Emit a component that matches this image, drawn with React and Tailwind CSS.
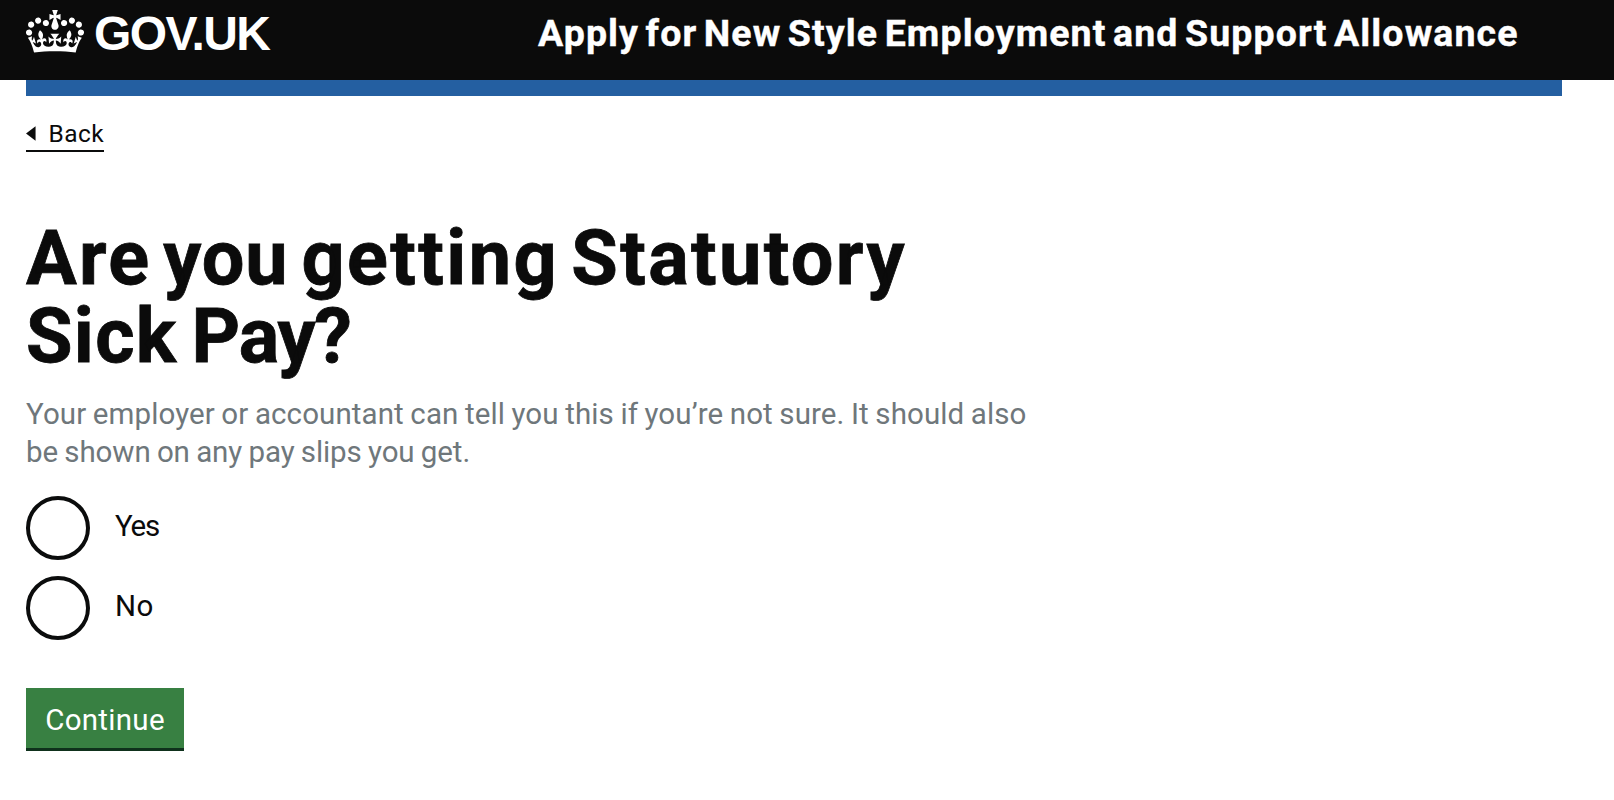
import React from "react";

function Crown() {
  return (
    <svg className="block h-[43px] w-[58px] shrink-0" viewBox="0 0 132 97" preserveAspectRatio="none" fill="#fff" aria-hidden="true">
      <path
        fillRule="evenodd"
        d="M25 30.2c3.5 1.5 7.7-.2 9.1-3.7 1.5-3.6-.2-7.8-3.9-9.2-3.6-1.4-7.6.3-9.1 3.9-1.4 3.5.3 7.5 3.9 9zM9 39.5c3.6 1.5 7.8-.2 9.2-3.7 1.5-3.6-.2-7.8-3.9-9.1-3.6-1.5-7.6.2-9.1 3.8-1.4 3.5.3 7.5 3.8 9zM4.4 57.2c3.5 1.5 7.7-.2 9.1-3.8 1.5-3.6-.2-7.7-3.9-9.1-3.5-1.5-7.6.3-9.1 3.8-1.4 3.5.3 7.6 3.9 9.1zm38.3-21.4c3.5 1.5 7.7-.2 9.1-3.8 1.5-3.6-.2-7.7-3.9-9.1-3.6-1.5-7.6.3-9.1 3.8-1.3 3.6.4 7.7 3.9 9.1zm64.4-5.6c-3.6 1.5-7.8-.2-9.1-3.7-1.5-3.6.2-7.8 3.8-9.2 3.6-1.4 7.7.3 9.2 3.9 1.3 3.5-.4 7.5-3.9 9zm15.9 9.3c-3.6 1.5-7.7-.2-9.1-3.7-1.5-3.6.2-7.8 3.7-9.1 3.6-1.5 7.7.2 9.2 3.8 1.5 3.5-.3 7.5-3.8 9zm4.7 17.7c-3.6 1.5-7.8-.2-9.2-3.8-1.5-3.6.2-7.7 3.9-9.1 3.6-1.5 7.7.3 9.2 3.8 1.3 3.5-.4 7.6-3.9 9.1zM89.3 35.8c-3.6 1.5-7.8-.2-9.2-3.8-1.4-3.6.2-7.7 3.9-9.1 3.6-1.5 7.7.3 9.2 3.8 1.4 3.6-.3 7.7-3.9 9.1zM69.7 17.7l8.9 4.7V9.3l-8.9 2.8c-.2-.3-.5-.6-.9-.9L72.4 0H59.6l3.5 11.2c-.3.3-.6.5-.9.9l-8.8-2.8v13.1l8.8-4.7c.3.3.6.7.9.9l-5 15.4v.1c-.2.8-.4 1.6-.4 2.4 0 4.1 3.1 7.5 7 8.1h.2c.3 0 .7.1 1 .1.4 0 .7 0 1-.1h.2c4-.6 7.1-4.1 7.1-8.1 0-.8-.1-1.7-.4-2.4V34l-5.1-15.4c.4-.2.7-.6 1-.9zM66 92.8c16.9 0 32.8 1.1 47.1 3.2 4-16.9 8.9-26.7 14-33.5l-9.6-3.4c1 4.9 1.1 7.2 0 10.2-1.5-1.4-3-4.3-4.2-8.7L108.6 76c2.8-2 5-3.2 7.5-3.3-4.4 9.4-10 11.9-13.6 11.2-4.3-.8-6.3-4.6-5.6-7.9 1-4.7 5.7-5.9 8-.5 4.3-8.7-3-11.4-7.6-8.8 7.1-7.2 7.9-13.5 2.1-21.1-8 6.1-8.1 12.3-4.5 20.8-4.7-5.4-12.1-2.5-9.5 6.2 3.4-5.2 7.9-2 7.2 3.1-.6 4.3-6.4 7.8-13.5 7.2-10.3-.9-10.9-8-11.2-13.8 2.5-.5 7.1 1.8 11 7.3L80.2 60c-4.1 4.4-8 5.3-12.3 5.4 1.4-4.4 8-11.6 8-11.6H55.5s6.4 7.2 7.9 11.6c-4.2-.1-8-1-12.3-5.4l1.4 16.4c3.9-5.5 8.5-7.7 10.9-7.3-.3 5.8-.9 12.8-11.1 13.8-7.2.6-12.9-2.9-13.5-7.2-.7-5 3.8-8.3 7.1-3.1 2.7-8.7-4.6-11.6-9.4-6.2 3.7-8.5 3.6-14.7-4.6-20.8-5.8 7.6-5 13.9 2.2 21.1-4.7-2.6-11.9.1-7.7 8.8 2.3-5.5 7.1-4.2 8.1.5.7 3.3-1.3 7.1-5.7 7.9-3.5.7-9-1.8-13.5-11.2 2.5.1 4.7 1.3 7.5 3.3l-4.7-15.4c-1.2 4.4-2.7 7.2-4.3 8.7-1.1-3-.9-5.3 0-10.2l-9.5 3.4c5 6.9 9.9 16.7 14 33.5 14.8-2.1 30.8-3.2 47.7-3.2z"
      />
    </svg>
  );
}

function Radio({ label, labelClass }) {
  return (
    <label className="flex h-16 items-center gap-[25px]">
      <input type="radio" name="ssp" className="size-16 shrink-0 appearance-none rounded-full border-4 border-[#0b0c0c] bg-white" />
      <span className={`pb-1 text-[29.5px] leading-[40px] ${labelClass}`}>{label}</span>
    </label>
  );
}

export default function App() {
  return (
    <div className="h-[800px] overflow-hidden bg-white font-[Roboto,sans-serif] whitespace-nowrap text-[#0b0b0b]">
      <header className="flex h-20 bg-[#0b0b0b] pl-[26px] text-white">
        <a className="flex w-[512px] pt-[10px]">
          <Crown />
          <span className="ml-[10px] pt-px font-['Liberation_Sans',sans-serif] text-[48px] leading-[46px] font-bold tracking-[-1.6px]">GOV.UK</span>
        </a>
        <span className="pt-[9px] text-[37.5px] leading-[48px] font-bold tracking-[1.1px] [word-spacing:-3.9px] [-webkit-text-stroke:0.4px]">
          Apply for New Style Employment and Support Allowance
        </span>
      </header>
      <main className="ml-[26px] w-[1536px]">
        <div className="h-4 bg-[#245fa1]" />
        <a className="mt-6 flex h-8 w-[78px] items-center border-b-2 border-[#0b0c0c] pb-[3px]">
          <svg className="h-[15px] w-[10px]" viewBox="0 0 10 15" fill="#0b0c0c" aria-hidden="true">
            <path d="M0 7.5 10 0v15z" />
          </svg>
          <span className="ml-[13px] text-[24.5px] leading-[28px] tracking-[0.4px]">Back</span>
        </a>
        <h1 className="mt-[67px] text-[75.6px] leading-[78px] font-bold [-webkit-text-stroke:0.8px]">
          <span className="tracking-[2.2px] [word-spacing:-9px]">Are </span>
          <span className="tracking-[1px] [word-spacing:-7px]">you </span>
          <span className="tracking-[2.4px] [word-spacing:-9px]">getting Statutory</span>
          <br />
          <span className="tracking-[1.3px] [word-spacing:-6px]">Sick </span>
          <span className="tracking-[-1.2px]">Pay?</span>
        </h1>
        <p className="mt-[20px] text-[29.5px] leading-[38px] text-[#6f777b]">
          <span className="tracking-[0.1px] [word-spacing:-0.9px]">
            Your employer or accountant can tell you this if you’re not sure. It should also
          </span>
          <br />
          <span className="tracking-[-0.1px] [word-spacing:-0.9px]">be shown on any pay slips you get.</span>
        </p>
        <div className="mt-[25px] flex flex-col gap-4">
          <Radio label="Yes" labelClass="tracking-[-1.2px]" />
          <Radio label="No" labelClass="tracking-[0.4px]" />
        </div>
        <button className="mt-12 flex h-[63px] w-[158px] items-center justify-center border-b-[3px] border-[#0f311c] bg-[#388042] pt-[5px] text-[29.5px] tracking-[0.3px] text-white">
          Continue
        </button>
      </main>
    </div>
  );
}
